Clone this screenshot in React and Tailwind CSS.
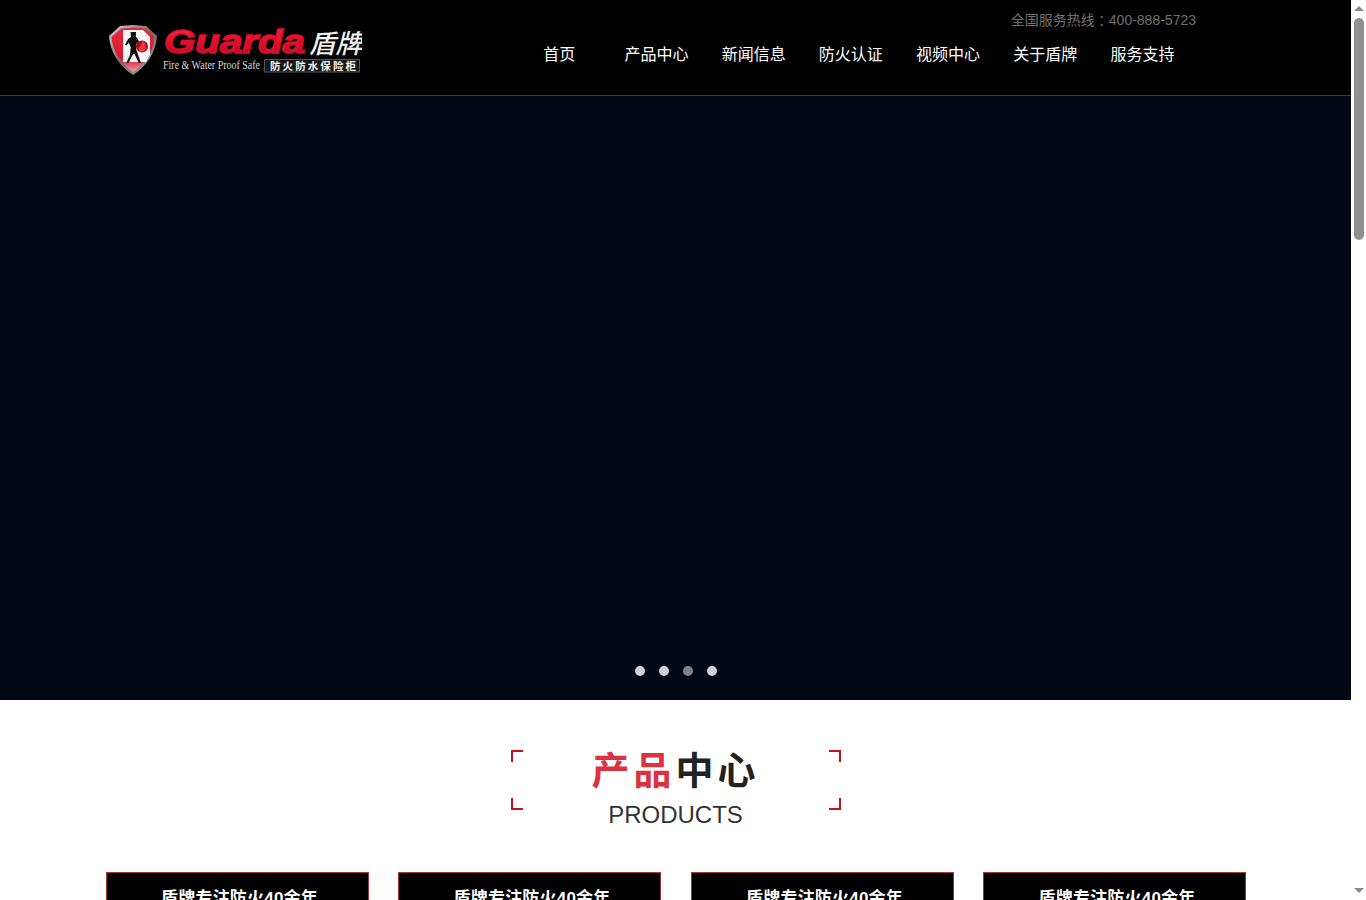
const CJK = { fontFamily: '"Liberation Sans","Noto Sans CJK SC",sans-serif' };

function Logo() {
  return (
    <svg width="256" height="56" viewBox="106 22 256 56" className="block shrink-0">
      <defs>
        <linearGradient id="guardaRed" x1="0" y1="0" x2="0" y2="1">
          <stop offset="0" stopColor="#f43a50" />
          <stop offset="0.5" stopColor="#e2102c" />
          <stop offset="1" stopColor="#a80c22" />
        </linearGradient>
        <linearGradient id="shieldRim" x1="0" y1="0" x2="1" y2="1">
          <stop offset="0" stopColor="#d8d8d8" />
          <stop offset="0.5" stopColor="#6a6a6a" />
          <stop offset="1" stopColor="#b0b0b0" />
        </linearGradient>
        <linearGradient id="shieldRed" x1="0" y1="0" x2="0" y2="1">
          <stop offset="0" stopColor="#e8283c" />
          <stop offset="0.7" stopColor="#d81830" />
          <stop offset="1" stopColor="#f2a0aa" />
        </linearGradient>
      </defs>
      <path d="M120 26 L133 25 L146 26 L157 36 C156 52 147 66 133 75 C119 66 110 52 109 36 Z" fill="url(#shieldRim)" />
      <path d="M121 28.500 L133 27.500 L145 28.500 L154.500 37 C153.500 51 145.500 64 133 72 C120.500 64 112.500 51 111.500 37 Z" fill="url(#shieldRed)" />
      <path d="M123 30 L143 30 L150 37 L150 55 L146 62 L123 62 Z" fill="#f6f6f6" />
      <path d="M130.500 32 L136 32 L135.800 37 L137.500 38.500 L140.500 45 L139 46 L136.800 42.500 L136 49 L138.500 56 L141 63 L138.800 63 L134.500 54 L133 54 L128.500 63 L126.300 63 L130 55 L130.800 47 L128.500 42.500 L126.500 45.500 L125 44.500 L128.500 38.500 L131 37 Z" fill="#0c0c0c" />
      <circle cx="142" cy="46.500" r="6" fill="#a81020" />
      <path d="M142.500 40 C145.500 43.500 146.500 47 144.500 50.500 C142.500 52.500 139.500 52 138.800 49 C139.500 46 142.500 45 142.500 40 Z" fill="#ee3a48" />
      <text x="164" y="53" textLength="141" lengthAdjust="spacingAndGlyphs" fontFamily="Liberation Sans" fontWeight="700" fontStyle="italic" fontSize="34" fill="url(#guardaRed)" stroke="#dc102a" strokeWidth="1.500">Guarda</text>
      <text x="309" y="53" textLength="53" lengthAdjust="spacingAndGlyphs" fontFamily="Noto Sans CJK SC" fontStyle="italic" fontWeight="500" fontSize="26" fill="#f2f2f2">盾牌</text>
      <text x="163" y="69" textLength="97" lengthAdjust="spacingAndGlyphs" fontFamily="Liberation Serif" fontSize="12" fill="#d8d8d8">Fire &amp; Water Proof Safe</text>
      <rect x="264.500" y="59.500" width="95" height="12.500" fill="#161616" stroke="#555" strokeWidth="1" />
      <text x="270" y="70" textLength="86" fontFamily="Noto Sans CJK SC" fontWeight="700" fontSize="10.500" fill="#f2f2f2">防火防水保险柜</text>
    </svg>
  );
}

const navItems = ['首页', '产品中心', '新闻信息', '防火认证', '视频中心', '关于盾牌', '服务支持'];

function Bracket({ className }) {
  return <span className={`absolute w-3 h-3 border-[#cc0f1c] ${className}`} />;
}

function Card() {
  return (
    <div className="border border-[#a8343c] bg-black h-[400px] pt-[14px] pl-[5px] text-center">
      <div className="text-[17px] leading-[24px] font-semibold tracking-[0.2px] text-white">盾牌专注防火40余年</div>
    </div>
  );
}

function Scrollbar() {
  return (
    <aside className="w-[15px] h-[900px] shrink-0 bg-white relative">
      <svg width="15" height="900" viewBox="0 0 15 900" className="block">
        <path d="M3 11 L8 6 L13 11 Z" fill="#8a8a8a" />
        <rect x="3" y="18" width="10" height="222" rx="5" fill="#909090" />
        <path d="M3 888 L13 888 L8 893 Z" fill="#8a8a8a" />
      </svg>
    </aside>
  );
}

export default function App() {
  return (
    <div className="flex h-[900px] overflow-hidden bg-white" style={CJK}>
      <main className="w-[1351px] shrink-0">
        <header className="h-[96px] bg-black border-b border-[#3a3a3a]">
          <div className="w-[1140px] mx-auto flex justify-between">
            <div className="pt-[22px]"><Logo /></div>
            <div className="mr-[49.500px]">
              <div className="h-[30px] pt-[10px] text-right text-sm leading-[20px] text-[#707070]">
                全国服务热线<span className="font-['Noto_Sans_CJK_TC'] leading-none inline-block h-[14px] align-[-1px]">：</span>400-888-5723
              </div>
              <nav className="flex mt-[12px] mr-[5px]">
                {navItems.map((n) => (
                  <a key={n} className="w-[97.200px] text-center text-base leading-[26px] text-white">{n}</a>
                ))}
              </nav>
            </div>
          </div>
        </header>

        <section className="relative h-[604px] bg-[#010714]">
          <div className="absolute left-0 right-0 bottom-[24px] flex justify-center gap-[14px]">
            <span className="w-[10px] h-[10px] rounded-full bg-[#ccd3dc]" />
            <span className="w-[10px] h-[10px] rounded-full bg-[#ccd3dc]" />
            <span className="w-[10px] h-[10px] rounded-full bg-[#7c8490]" />
            <span className="w-[10px] h-[10px] rounded-full bg-[#ccd3dc]" />
          </div>
        </section>

        <section className="pt-[50px]">
          <div className="relative w-[330px] h-[60px] mx-auto">
            <Bracket className="left-0 top-0 border-l-2 border-t-2" />
            <Bracket className="right-0 top-0 border-r-2 border-t-2" />
            <Bracket className="left-0 bottom-0 border-l-2 border-b-2" />
            <Bracket className="right-0 bottom-0 border-r-2 border-b-2" />
            <div className="text-center">
              <div className="text-[38px] leading-[42px] font-bold tracking-[4px] text-[#222222]">
                <span className="text-[#d9333f]">产品</span>中心
              </div>
              <div className="text-2xl leading-[30px] mt-[8px] text-[#333333]">PRODUCTS</div>
            </div>
          </div>
          <div className="w-[1140px] mx-auto mt-[62px] grid grid-cols-[repeat(4,263px)] gap-[29.500px]">
            <Card /><Card /><Card /><Card />
          </div>
        </section>
      </main>
      <Scrollbar />
    </div>
  );
}
